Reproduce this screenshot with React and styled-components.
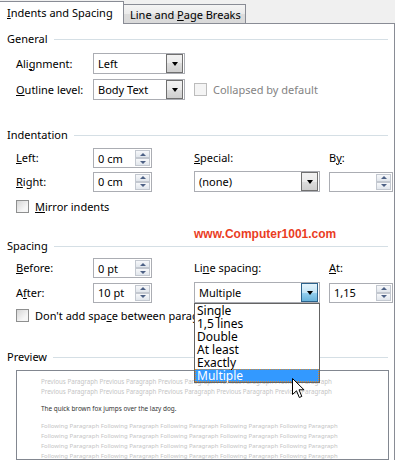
import React from 'react';
import styled, { createGlobalStyle, css } from 'styled-components';

const GlobalStyle = createGlobalStyle`
  html, body {
    margin: 0;
    padding: 0;
    background: #f0f0f0;
  }
  body {
    font-family: "Noto Sans", "Open Sans", sans-serif;
    font-size: 11px;
    color: #000;
  }
  u {
    text-underline-offset: 1px;
  }
`;

const Dialog = styled.div`
  position: relative;
  width: 395px;
  height: 460px;
  overflow: hidden;
  background: #f0f0f0;
`;

const TabStrip = styled.div`
  display: flex;
  align-items: flex-end;
  height: 23px;
`;

const Tab = styled.div`
  position: relative;
  box-sizing: border-box;
  display: flex;
  align-items: center;
  white-space: nowrap;
  border-right: 1px solid #898c95;
  border-top: 1px solid #898c95;
  ${p => p.$active ? css`
    z-index: 2;
    width: 124px;
    height: 23px;
    margin-bottom: -1px;
    padding: 0 0 2px 7px;
    background: #fff;
  ` : css`
    width: 122px;
    height: 19px;
    padding: 0 0 0 6px;
    background: linear-gradient(#f4f4f4, #ebebeb 50%, #dddddd 50%, #d9d9d9);
  `}
`;

const Panel = styled.div`
  box-sizing: border-box;
  height: 437px;
  background: #fff;
  border-top: 1px solid #898c95;
  border-right: 1px solid #898c95;
  padding-top: 8px;
`;

const SectionHead = styled.div`
  display: flex;
  align-items: center;
  gap: 6px;
  height: 14px;
  line-height: 14px;
  padding: 0 6px 0 7px;
  margin-top: ${p => p.$top || 0}px;
  &::after {
    content: '';
    flex: 1;
    height: 1px;
    background: #d5dfe5;
  }
`;

const FormGrid = styled.div`
  display: grid;
  grid-template-columns: 77px 101px 135px 64px;
  row-gap: ${p => p.$gap}px;
  align-items: center;
  padding-left: 16px;
  margin-top: ${p => p.$top}px;
`;

const Label = styled.span`
  white-space: nowrap;
  line-height: 14px;
`;

const SelectBox = styled.div`
  position: relative;
  box-sizing: border-box;
  width: ${p => p.$w}px;
  height: 21px;
  border: 1px solid #abadb3;
  background: #fff;
  display: flex;
  align-items: center;
  padding: 0 1px 0 4px;
  white-space: nowrap;
`;

const SelectButton = styled.div`
  margin-left: auto;
  box-sizing: border-box;
  width: 17px;
  height: 19px;
  display: flex;
  align-items: center;
  justify-content: center;
  border: 1px solid ${p => p.$focus ? '#2c628b' : '#707070'};
  background: ${p => p.$focus
    ? 'linear-gradient(#e5f4fc, #c4e5f6 50%, #98d1ef 50%, #68b3db)'
    : 'linear-gradient(#f2f2f2, #ebebeb 50%, #dddddd 50%, #cfcfcf)'};
  &::after {
    content: '';
    border-left: 3.5px solid transparent;
    border-right: 3.5px solid transparent;
    border-top: 4px solid #000;
  }
`;

const SpinBox = styled.div`
  box-sizing: border-box;
  width: ${p => p.$w}px;
  height: 20px;
  border: 1px solid #abadb3;
  background: #fff;
  display: flex;
  align-items: center;
  padding: 0 1px 0 4px;
`;

const SpinButtons = styled.div`
  margin-left: auto;
  display: flex;
  flex-direction: column;
`;

const SpinButton = styled.div`
  box-sizing: border-box;
  width: 15px;
  height: 8px;
  border: 1px solid #c3c8d0;
  background: linear-gradient(#f7f8fa, #e1e6ec);
  display: flex;
  align-items: center;
  justify-content: center;
  &::after {
    content: '';
    border-left: 3px solid transparent;
    border-right: 3px solid transparent;
    ${p => p.$down
      ? 'border-top: 3px solid #4d6185;'
      : 'border-bottom: 3px solid #4d6185;'}
  }
`;

const CheckRow = styled.label`
  display: flex;
  align-items: center;
  gap: 6px;
  height: 13px;
  line-height: 13px;
  white-space: nowrap;
  padding-left: ${p => p.$indent || 0}px;
  margin-top: ${p => p.$top || 0}px;
  grid-column: ${p => p.$span || 'auto'};
  color: ${p => p.$disabled ? '#838383' : '#000'};
`;

const CheckBox = styled.span`
  flex: none;
  box-sizing: border-box;
  width: 13px;
  height: 13px;
  border: 1px solid ${p => p.$disabled ? '#bcbcbc' : '#8e8f8f'};
  background: ${p => p.$disabled
    ? '#f4f4f4'
    : 'linear-gradient(135deg, #d6d6d6, #f6f6f6 70%)'};
`;

const DropWrap = styled.div`
  position: relative;
`;

const ListBox = styled.ul`
  position: absolute;
  top: 100%;
  left: 0;
  z-index: 5;
  box-sizing: border-box;
  width: 126px;
  margin: 0;
  padding: 0;
  list-style: none;
  background: #fff;
  border: 1px solid #646464;
  font-size: 12px;
`;

const ListItem = styled.li`
  height: 13px;
  line-height: 13px;
  padding-left: 2px;
  ${p => p.$active && css`
    background: #3399ff;
    color: #fff;
    outline: 1px dotted #d98a2f;
    outline-offset: -1px;
  `}
`;

const PreviewBox = styled.div`
  box-sizing: border-box;
  width: 373px;
  height: 90px;
  margin: 6px 0 0 16px;
  border: 1px solid #828790;
  padding: 6px 0 0 24px;
  overflow: hidden;
  font-size: 6.2px;
`;

const PreviewLine = styled.div`
  height: 10px;
  line-height: 10px;
  white-space: nowrap;
  color: ${p => p.$main ? '#333' : '#c4c4c4'};
  font-size: ${p => p.$size || 6.2}px;
  margin: ${p => p.$main ? '7px 0' : '0'};
`;

const Watermark = styled.div`
  position: absolute;
  left: 194px;
  top: 227px;
  font-family: "Liberation Sans", Arial, sans-serif;
  font-weight: bold;
  font-size: 12px;
  color: #ea3d1f;
  white-space: nowrap;
`;

const Cursor = styled.svg`
  position: absolute;
  left: 292px;
  top: 378px;
  z-index: 10;
`;

const Select = ({ w, value, focus }) => (
  <SelectBox $w={w}>
    <span>{value}</span>
    <SelectButton $focus={focus} />
  </SelectBox>
);

const Spinner = ({ w, value }) => (
  <SpinBox $w={w}>
    <span>{value}</span>
    <SpinButtons>
      <SpinButton />
      <SpinButton $down />
    </SpinButtons>
  </SpinBox>
);

const spacingOptions = ['Single', '1,5 lines', 'Double', 'At least', 'Exactly', 'Multiple'];
const prev = 'Previous Paragraph Previous Paragraph Previous Paragraph Previous Paragraph Previous Paragraph';
const next = 'Following Paragraph Following Paragraph Following Paragraph Following Paragraph Following Paragraph';

export default function App() {
  return (
    <Dialog>
      <GlobalStyle />
      <TabStrip>
        <Tab $active><span><u>I</u>ndents and Spacing</span></Tab>
        <Tab><span>Line and <u>P</u>age Breaks</span></Tab>
      </TabStrip>
      <Panel>
        <SectionHead>General</SectionHead>
        <FormGrid $gap={5} $top={7}>
          <Label>Ali<u>g</u>nment:</Label>
          <Select w={92} value="Left" />
          <span />
          <span />
          <Label><u>O</u>utline level:</Label>
          <Select w={92} value="Body Text" />
          <CheckRow $disabled $span="3 / 5">
            <CheckBox $disabled />
            <span>Collapsed by default</span>
          </CheckRow>
        </FormGrid>

        <SectionHead $top={28}>Indentation</SectionHead>
        <FormGrid $gap={3} $top={6}>
          <Label><u>L</u>eft:</Label>
          <Spinner w={59} value="0 cm" />
          <Label><u>S</u>pecial:</Label>
          <Label>B<u>y</u>:</Label>
          <Label><u>R</u>ight:</Label>
          <Spinner w={59} value="0 cm" />
          <Select w={126} value="(none)" />
          <Spinner w={64} value="" />
        </FormGrid>
        <CheckRow $indent={16} $top={8}>
          <CheckBox />
          <span><u>M</u>irror indents</span>
        </CheckRow>

        <SectionHead $top={26}>Spacing</SectionHead>
        <FormGrid $gap={4} $top={5}>
          <Label><u>B</u>efore:</Label>
          <Spinner w={59} value="0 pt" />
          <Label>Li<u>n</u>e spacing:</Label>
          <Label><u>A</u>t:</Label>
          <Label>A<u>f</u>ter:</Label>
          <Spinner w={59} value="10 pt" />
          <DropWrap>
            <Select w={126} value="Multiple" focus />
            <ListBox>
              {spacingOptions.map(o => (
                <ListItem key={o} $active={o === 'Multiple'}>{o}</ListItem>
              ))}
            </ListBox>
          </DropWrap>
          <Spinner w={64} value="1,15" />
        </FormGrid>
        <CheckRow $indent={16} $top={6}>
          <CheckBox />
          <span>Don't add spa<u>c</u>e between paragraphs of the same style</span>
        </CheckRow>

        <SectionHead $top={28}>Preview</SectionHead>
        <PreviewBox>
          <PreviewLine>{prev}</PreviewLine>
          <PreviewLine>{prev}</PreviewLine>
          <PreviewLine $main $size={6.4}>The quick brown fox jumps over the lazy dog.</PreviewLine>
          <PreviewLine $size={6}>{next}</PreviewLine>
          <PreviewLine $size={6}>{next}</PreviewLine>
          <PreviewLine $size={6}>{next}</PreviewLine>
          <PreviewLine $size={6}>{next}</PreviewLine>
        </PreviewBox>
      </Panel>
      <Watermark>www.Computer1001.com</Watermark>
      <Cursor width="13" height="21" viewBox="0 0 13 21">
        <path d="M0.5 0.5 L0.5 16.5 L4.5 12.8 L7.3 19.5 L9.8 18.4 L7 11.8 L12 11.8 Z"
          fill="#fff" stroke="#000" strokeWidth="1" strokeLinejoin="miter" />
      </Cursor>
    </Dialog>
  );
}
